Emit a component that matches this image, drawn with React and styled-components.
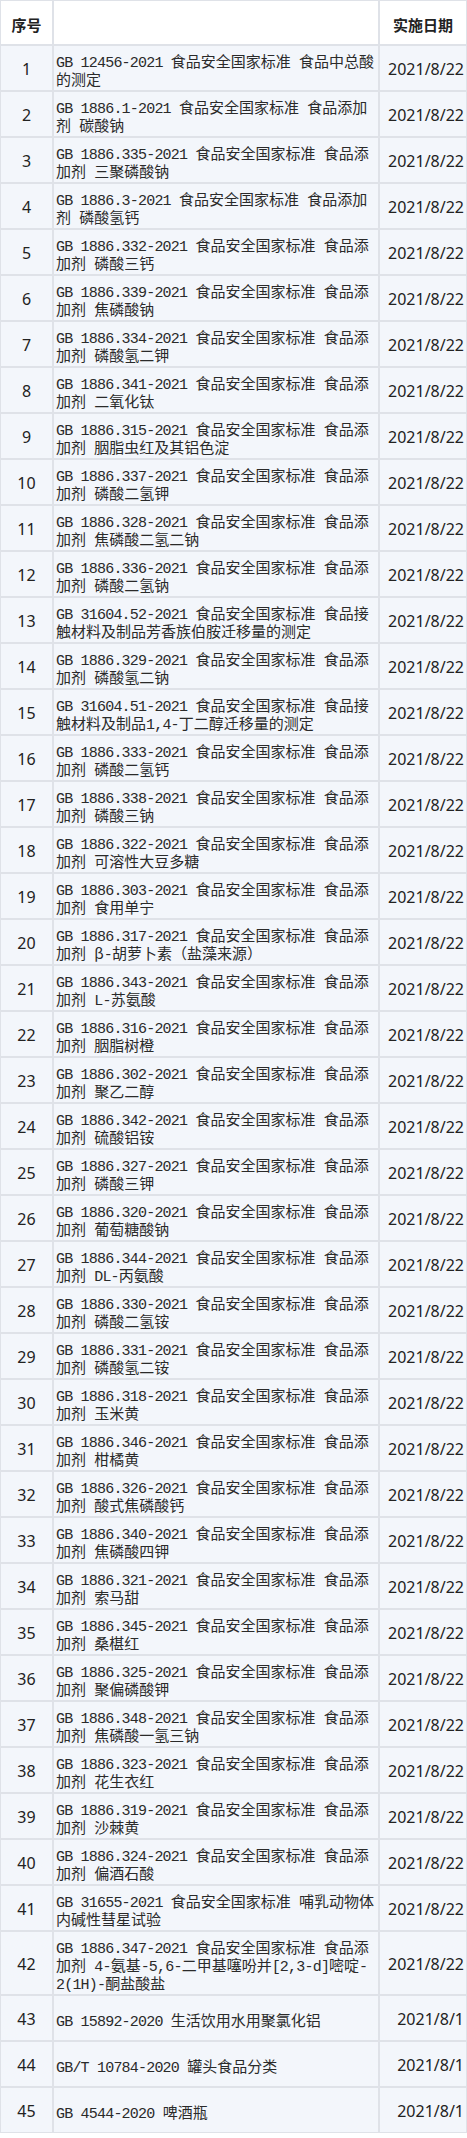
import React from "react";
import styled, { createGlobalStyle } from "styled-components";

const ADD = "食品安全国家标准 食品添加剂";
const NAT = "食品安全国家标准";

const rows = [
  ["GB 12456-2021", `${NAT} 食品中总酸的测定`, "2021/8/22"],
  ["GB 1886.1-2021", `${ADD} 碳酸钠`, "2021/8/22"],
  ["GB 1886.335-2021", `${ADD} 三聚磷酸钠`, "2021/8/22"],
  ["GB 1886.3-2021", `${ADD} 磷酸氢钙`, "2021/8/22"],
  ["GB 1886.332-2021", `${ADD} 磷酸三钙`, "2021/8/22"],
  ["GB 1886.339-2021", `${ADD} 焦磷酸钠`, "2021/8/22"],
  ["GB 1886.334-2021", `${ADD} 磷酸氢二钾`, "2021/8/22"],
  ["GB 1886.341-2021", `${ADD} 二氧化钛`, "2021/8/22"],
  ["GB 1886.315-2021", `${ADD} 胭脂虫红及其铝色淀`, "2021/8/22"],
  ["GB 1886.337-2021", `${ADD} 磷酸二氢钾`, "2021/8/22"],
  ["GB 1886.328-2021", `${ADD} 焦磷酸二氢二钠`, "2021/8/22"],
  ["GB 1886.336-2021", `${ADD} 磷酸二氢钠`, "2021/8/22"],
  ["GB 31604.52-2021", `${NAT} 食品接触材料及制品芳香族伯胺迁移量的测定`, "2021/8/22"],
  ["GB 1886.329-2021", `${ADD} 磷酸氢二钠`, "2021/8/22"],
  ["GB 31604.51-2021", `${NAT} 食品接触材料及制品1,4-丁二醇迁移量的测定`, "2021/8/22"],
  ["GB 1886.333-2021", `${ADD} 磷酸二氢钙`, "2021/8/22"],
  ["GB 1886.338-2021", `${ADD} 磷酸三钠`, "2021/8/22"],
  ["GB 1886.322-2021", `${ADD} 可溶性大豆多糖`, "2021/8/22"],
  ["GB 1886.303-2021", `${ADD} 食用单宁`, "2021/8/22"],
  ["GB 1886.317-2021", `${ADD} β-胡萝卜素（盐藻来源）`, "2021/8/22"],
  ["GB 1886.343-2021", `${ADD} L-苏氨酸`, "2021/8/22"],
  ["GB 1886.316-2021", `${ADD} 胭脂树橙`, "2021/8/22"],
  ["GB 1886.302-2021", `${ADD} 聚乙二醇`, "2021/8/22"],
  ["GB 1886.342-2021", `${ADD} 硫酸铝铵`, "2021/8/22"],
  ["GB 1886.327-2021", `${ADD} 磷酸三钾`, "2021/8/22"],
  ["GB 1886.320-2021", `${ADD} 葡萄糖酸钠`, "2021/8/22"],
  ["GB 1886.344-2021", `${ADD} DL-丙氨酸`, "2021/8/22"],
  ["GB 1886.330-2021", `${ADD} 磷酸二氢铵`, "2021/8/22"],
  ["GB 1886.331-2021", `${ADD} 磷酸氢二铵`, "2021/8/22"],
  ["GB 1886.318-2021", `${ADD} 玉米黄`, "2021/8/22"],
  ["GB 1886.346-2021", `${ADD} 柑橘黄`, "2021/8/22"],
  ["GB 1886.326-2021", `${ADD} 酸式焦磷酸钙`, "2021/8/22"],
  ["GB 1886.340-2021", `${ADD} 焦磷酸四钾`, "2021/8/22"],
  ["GB 1886.321-2021", `${ADD} 索马甜`, "2021/8/22"],
  ["GB 1886.345-2021", `${ADD} 桑椹红`, "2021/8/22"],
  ["GB 1886.325-2021", `${ADD} 聚偏磷酸钾`, "2021/8/22"],
  ["GB 1886.348-2021", `${ADD} 焦磷酸一氢三钠`, "2021/8/22"],
  ["GB 1886.323-2021", `${ADD} 花生衣红`, "2021/8/22"],
  ["GB 1886.319-2021", `${ADD} 沙棘黄`, "2021/8/22"],
  ["GB 1886.324-2021", `${ADD} 偏酒石酸`, "2021/8/22"],
  ["GB 31655-2021", `${NAT} 哺乳动物体内碱性彗星试验`, "2021/8/22"],
  ["GB 1886.347-2021", `${ADD} 4-氨基-5,6-二甲基噻吩并[2,3-d]嘧啶-\u200B2(1H)-酮盐酸盐`, "2021/8/22"],
  ["GB 15892-2020", "生活饮用水用聚氯化铝", "2021/8/1"],
  ["GB/T 10784-2020", "罐头食品分类", "2021/8/1"],
  ["GB 4544-2020", "啤酒瓶", "2021/8/1"],
];

// ascii runs get the narrow monospace face, like the SimSun half-width glyphs
const withLatin = (text) =>
  text.split(/([\x20-\x7E]+)/).map((part, i) =>
    /^[\x20-\x7E]+$/.test(part) ? <Latin key={i}>{part}</Latin> : part
  );

const App = () => (
  <>
    <GlobalStyle />
    <Table>
      <thead>
        <tr>
          <HeadCell $w={53}>序号</HeadCell>
          <HeadCell $w={326}></HeadCell>
          <HeadCell $w={88}>实施日期</HeadCell>
        </tr>
      </thead>
      <tbody>
        {rows.map(([code, title, date], i) => (
          <tr key={code}>
            <NumCell>{i + 1}</NumCell>
            <TitleCell>{withLatin(`${code} ${title}`)}</TitleCell>
            <DateCell>{date}</DateCell>
          </tr>
        ))}
      </tbody>
    </Table>
  </>
);

const GlobalStyle = createGlobalStyle`
  html, body {
    margin: 0;
    padding: 0;
    background: #fff;
  }
  body {
    font-family: "Noto Sans", "Noto Sans CJK SC", sans-serif;
    color: #222;
  }
`;

const Table = styled.table`
  width: 467px;
  table-layout: fixed;
  border-collapse: separate;
  border-spacing: 0;
`;

const HeadCell = styled.th`
  box-sizing: border-box;
  width: ${(p) => p.$w}px;
  height: 45px;
  padding: 4px 0 0;
  border: 1px solid #dfe2e8;
  background: #fff;
  font-family: "Noto Sans CJK SC", sans-serif;
  font-size: 15px;
  font-weight: 700;
  line-height: 17.5px;
  color: #222;
  text-align: center;
  vertical-align: middle;
`;

const BodyCell = styled.td`
  box-sizing: border-box;
  height: 46px;
  padding: 6px 0 2px;
  border: 1px solid #dfe2e8;
  background: #f3f6fb;
  line-height: 17.5px;
  vertical-align: middle;
`;

const NumCell = styled(BodyCell)`
  font-family: "Noto Sans", sans-serif;
  font-size: 16px;
  color: #222;
  text-align: center;
`;

const TitleCell = styled(BodyCell)`
  padding-left: 2px;
  padding-right: 1px;
  font-family: "Noto Sans CJK SC", sans-serif;
  font-size: 15px;
  color: #2a2a2a;
  text-align: left;
`;

const DateCell = styled(BodyCell)`
  padding-right: 2px;
  font-family: "Noto Sans", sans-serif;
  font-size: 16px;
  color: #222;
  text-align: right;
  white-space: nowrap;
`;

const Latin = styled.span`
  font-family: "Liberation Mono", monospace;
  font-size: 15px;
  letter-spacing: -0.8px;
  line-height: 12px;
`;

export default App;
